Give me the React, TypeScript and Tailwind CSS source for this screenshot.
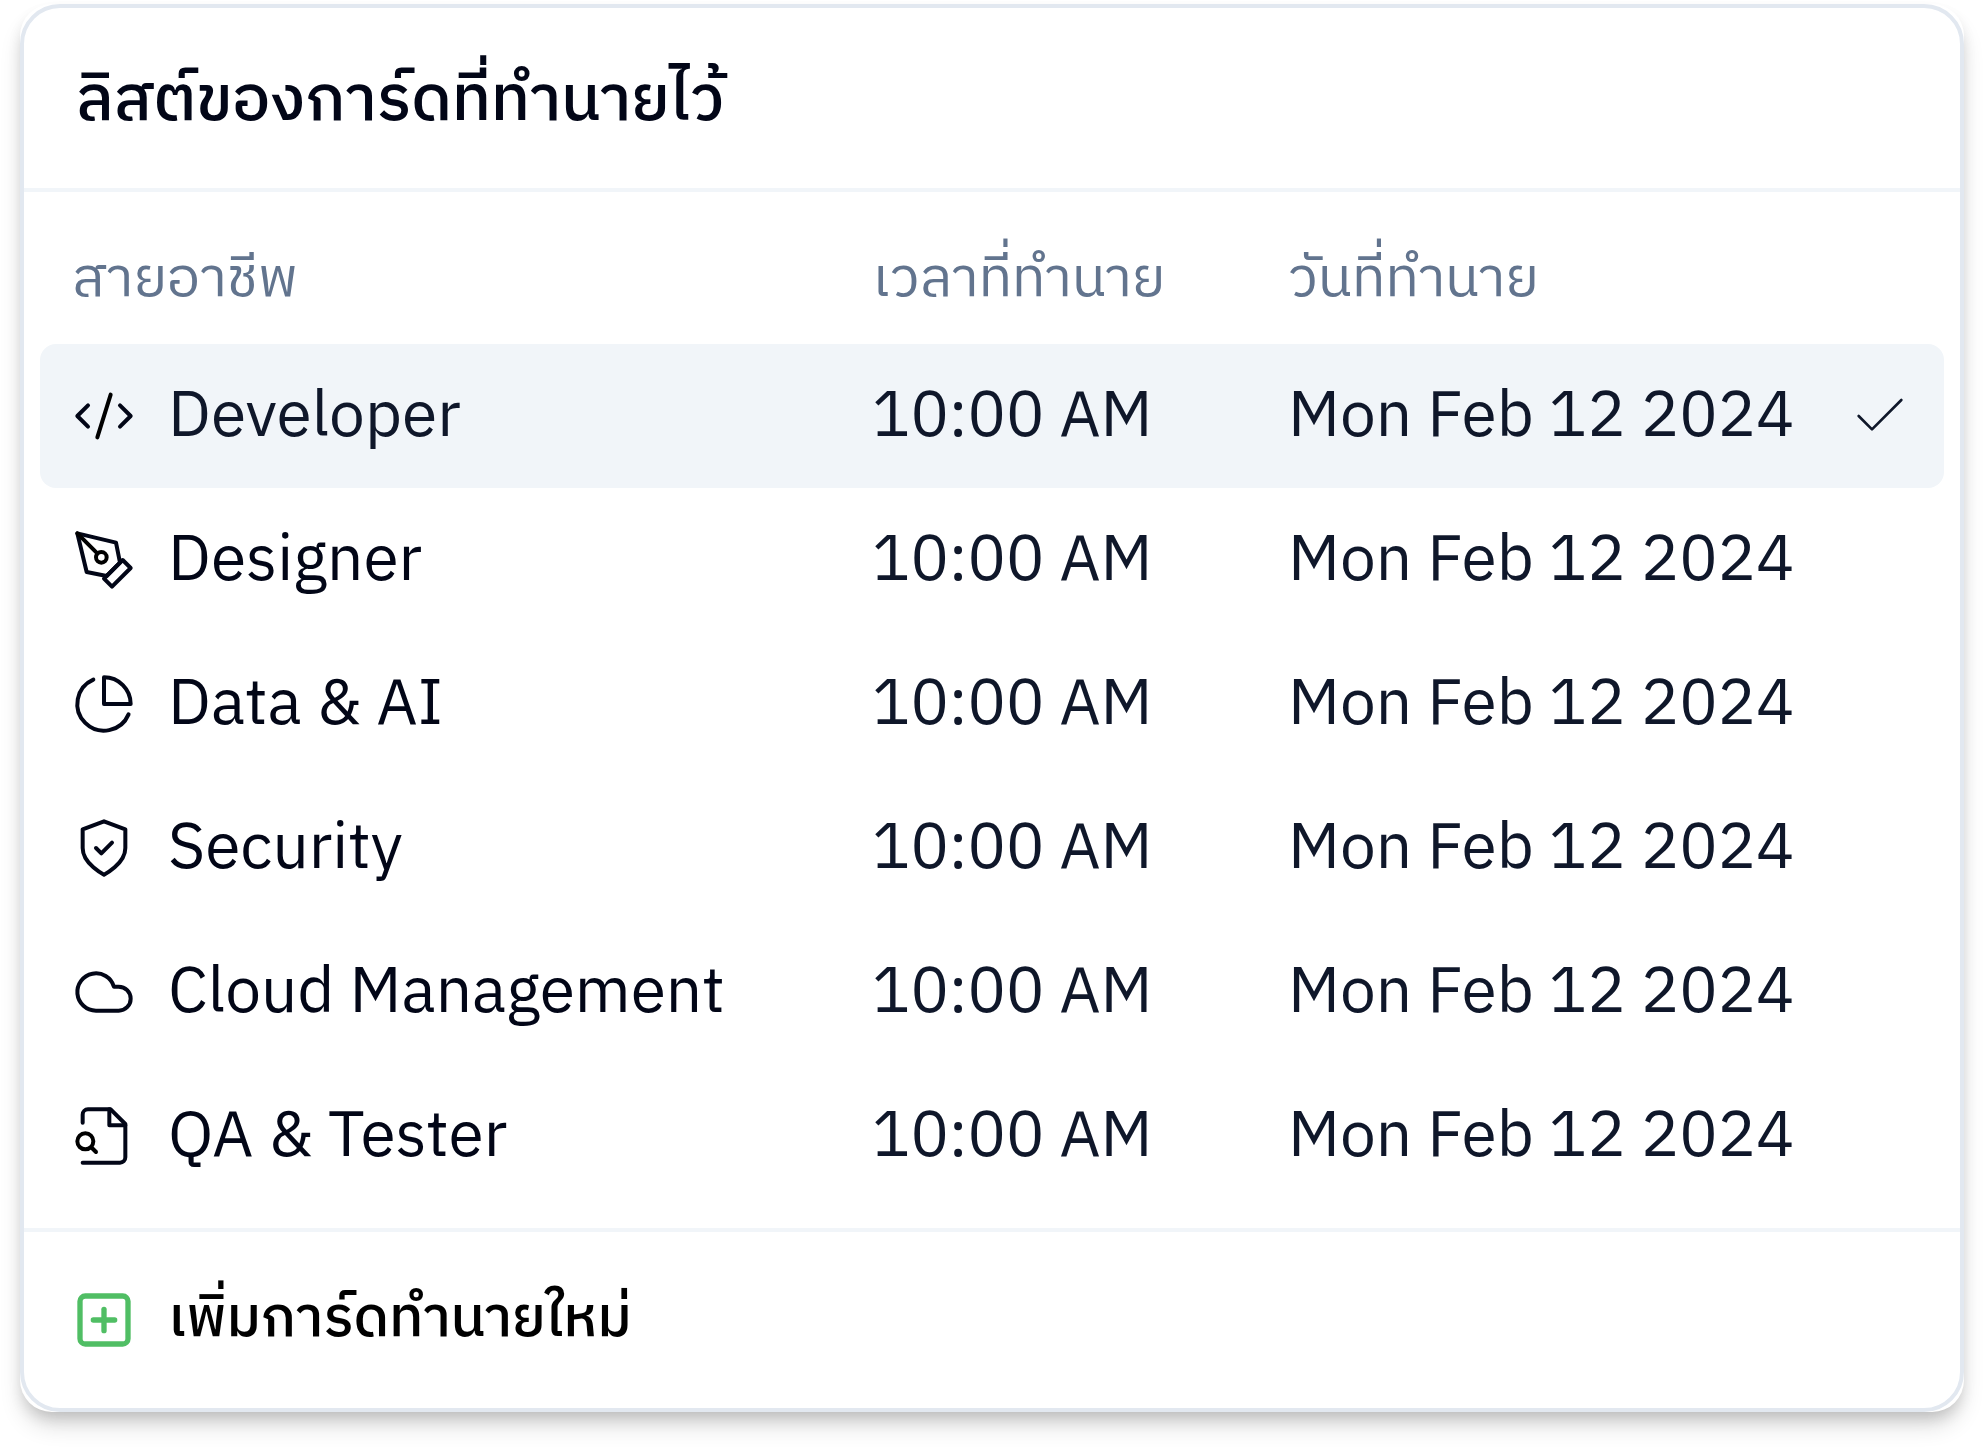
import type { ReactNode } from "react";

type IconProps = { children: ReactNode; stroke?: string };

function Icon({ children, stroke = "1.5" }: IconProps) {
  return (
    <svg
      viewBox="0 0 24 24"
      fill="none"
      stroke="currentColor"
      strokeWidth={stroke}
      strokeLinecap="round"
      strokeLinejoin="round"
      aria-hidden="true"
      className="size-16 shrink-0"
    >
      {children}
    </svg>
  );
}

const careers = [
  {
    name: "Developer",
    selected: true,
    icon: (
      <Icon>
        <path d="m18 16 4-4-4-4" />
        <path d="m6 8-4 4 4 4" />
        <path d="m14.5 4-5 16" className="stroke-black" />
      </Icon>
    ),
  },
  {
    name: "Designer",
    selected: false,
    icon: (
      <Icon>
        <path d="m12 19 7-7 3 3-7 7-3-3z" />
        <path d="m18 13-1.5-7.5L2 2l3.5 14.5L13 18l5-5z" />
        <path d="m2 2 7.586 7.586" className="stroke-black" />
        <circle cx="11" cy="11" r="2" className="stroke-black" />
      </Icon>
    ),
  },
  {
    name: "Data & AI",
    selected: false,
    icon: (
      <Icon>
        <path d="M21.21 15.89A10 10 0 1 1 8 2.83" />
        <path d="M22 12A10 10 0 0 0 12 2v10z" />
      </Icon>
    ),
  },
  {
    name: "Security",
    selected: false,
    icon: (
      <Icon>
        <path d="M12 22s8-4 8-10V5l-8-3-8 3v7c0 6 8 10 8 10" />
        <path d="m9 12 2 2 4-4" />
      </Icon>
    ),
  },
  {
    name: "Cloud Management",
    selected: false,
    icon: (
      <Icon>
        <path d="M17.5 19H9a7 7 0 1 1 6.71-9h1.79a4.5 4.5 0 1 1 0 9Z" />
      </Icon>
    ),
  },
  {
    name: "QA & Tester",
    selected: false,
    icon: (
      <Icon>
        <path d="M4 22h14a2 2 0 0 0 2-2V7.5L14.5 2H6a2 2 0 0 0-2 2v3" />
        <path d="M14 2v6h6" />
        <circle cx="5" cy="14" r="3" className="stroke-black" />
        <path d="m9 18-1.5-1.5" className="stroke-black" />
      </Icon>
    ),
  },
];

function CareerRow({ name, selected, icon }: (typeof careers)[number]) {
  return (
    <tr
      aria-selected={selected}
      className={selected ? "h-36 bg-slate-100 text-[#0f172a]" : "h-36 text-[#0f172a]"}
    >
      <td className="rounded-l-2xl p-0 pl-8">
        <button type="button" className="flex w-full items-center gap-8 text-left text-[#020617]">
          {icon}
          <span className={selected ? "pt-1 text-[#0f172a]" : "pt-1 text-[#020617]"}>{name}</span>
        </button>
      </td>
      <td className="p-0 pt-1">10:00 AM</td>
      <td className="p-0 pt-1">Mon Feb 12 2024</td>
      <td className="rounded-r-2xl p-0 pr-8">
        {selected && (
          <div className="flex justify-end">
            <Icon stroke="1">
              <path d="M20 6 9 17l-5-5" />
            </Icon>
          </div>
        )}
      </td>
    </tr>
  );
}

export default function App() {
  return (
    <main className="min-h-screen bg-white px-5 pt-1 pb-9 font-['IBM_Plex_Sans_Thai','IBM_Plex_Sans','Noto_Sans_Thai','Noto_Sans',sans-serif]">
      <div className="rounded-[32px] bg-white shadow-[0_16px_24px_-4px_rgba(0,0,0,0.16),0_8px_16px_-4px_rgba(0,0,0,0.16)]">
        <section className="rounded-[40px] border-4 border-slate-200 bg-white">
          <header className="border-b-4 border-slate-100 px-13 pt-13 pb-11">
            <h1 className="text-[64px] leading-[84px] font-medium text-[#020617]">
              ลิสต์ของการ์ดที่ทำนายไว้
            </h1>
          </header>

          <div className="px-4 py-5">
            <table className="w-full table-fixed border-separate border-spacing-0 text-left text-[64px] leading-[96px]">
              <colgroup>
                <col className="w-[43.7%]" />
                <col className="w-[21.85%]" />
                <col />
                <col className="w-32" />
              </colgroup>
              <thead className="text-[56px] text-slate-500">
                <tr className="h-33">
                  <th scope="col" className="p-0 pt-1 pl-8 font-normal">สายอาชีพ</th>
                  <th scope="col" className="p-0 pt-1 font-normal">เวลาที่ทำนาย</th>
                  <th scope="col" className="p-0 pt-1 font-normal">วันที่ทำนาย</th>
                  <td className="p-0" />
                </tr>
              </thead>
              <tbody>
                {careers.map((career) => (
                  <CareerRow key={career.name} {...career} />
                ))}
              </tbody>
            </table>
          </div>

          <footer className="border-t-4 border-slate-100 px-12 py-10">
            <button type="button" className="flex items-center gap-8 text-[56px] leading-[96px] font-medium text-black">
              <span className="text-[#50be64]">
                <Icon stroke="2">
                  <rect width="18" height="18" x="3" y="3" rx="2" />
                  <path d="M8 12h8" />
                  <path d="M12 8v8" />
                </Icon>
              </span>
              เพิ่มการ์ดทำนายใหม่
            </button>
          </footer>
        </section>
      </div>
    </main>
  );
}
